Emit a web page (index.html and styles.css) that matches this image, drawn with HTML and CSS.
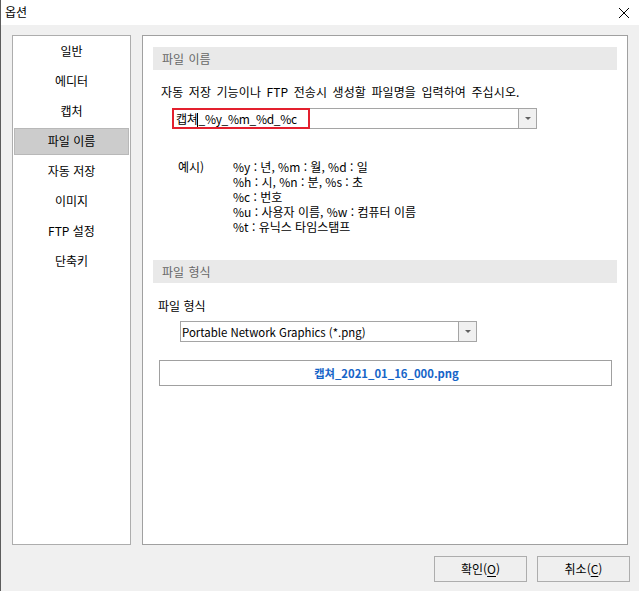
FILE: index.html
```html
<!DOCTYPE html>
<html lang="ko">
<head>
<meta charset="utf-8">
<title>옵션</title>
<link rel="stylesheet" href="styles.css">
</head>
<body>
<div class="window">
  <div class="titlebar">
    <span class="title">옵션</span>
    <svg class="close" width="12" height="12" viewBox="0 0 12 12"><path d="M1 1 L11 11 M11 1 L1 11" stroke="#000" stroke-width="1" fill="none"/></svg>
  </div>
  <div class="main">
    <div class="nav">
      <div class="nav-item">일반</div>
      <div class="nav-item">에디터</div>
      <div class="nav-item">캡처</div>
      <div class="nav-item selected">파일 이름</div>
      <div class="nav-item">자동 저장</div>
      <div class="nav-item">이미지</div>
      <div class="nav-item">FTP 설정</div>
      <div class="nav-item">단축키</div>
    </div>
    <div class="content">
      <div class="section-head">파일 이름</div>
      <p class="desc">자동 저장 기능이나 FTP 전송시 생성할 파일명을 입력하여 주십시오.</p>
      <div class="combo combo-name">
        <span class="combo-text name-text">캡쳐<span class="caret"></span>_%y_%m_%d_%c</span>
        <span class="highlight"></span>
        <span class="drop"><span class="arrow"></span></span>
      </div>
      <div class="examples">
        <div class="ex-label">예시)</div>
        <div class="ex-list">
          <div>%y : 년, %m : 월, %d : 일</div>
          <div>%h : 시, %n : 분, %s : 초</div>
          <div>%c : 번호</div>
          <div>%u : 사용자 이름, %w : 컴퓨터 이름</div>
          <div>%t : 유닉스 타임스탬프</div>
        </div>
      </div>
      <div class="section-head second">파일 형식</div>
      <div class="label">파일 형식</div>
      <div class="combo combo-format">
        <span class="combo-text format-text">Portable Network Graphics (*.png)</span>
        <span class="drop"><span class="arrow"></span></span>
      </div>
      <div class="preview">캡쳐_2021_01_16_000.png</div>
    </div>
  </div>
  <div class="footer">
    <div class="btn">확인(<u>O</u>)</div>
    <div class="btn">취소(<u>C</u>)</div>
  </div>
</div>
</body>
</html>
```
FILE: styles.css
```css
html, body {
  margin: 0;
  padding: 0;
}
body {
  width: 639px;
  height: 591px;
  overflow: hidden;
  font-family: "Noto Sans CJK KR", "Noto Sans", sans-serif;
  font-size: 12px;
  color: #000;
  background: #f0f0f0;
}
.window {
  height: 591px;
  border-left: 1px solid #5c5c5c;
  display: flex;
  flex-direction: column;
  background: #f0f0f0;
}
.titlebar {
  height: 25px;
  background: #fff;
  display: flex;
  align-items: center;
  justify-content: space-between;
  padding: 0 9px 0 4px;
  flex: none;
}
.title {
  line-height: 16px;
  margin-top: -1px;
}
.close {
  margin-top: 1px;
}
.main {
  display: flex;
  gap: 11px;
  padding: 10px 0 0 11px;
  height: 510px;
  flex: none;
}
.nav {
  width: 119px;
  box-sizing: border-box;
  background: #fff;
  border: 1px solid #adadad;
  display: flex;
  flex-direction: column;
  gap: 3px;
  padding: 1px 1px 0 1px;
}
.nav-item {
  height: 27px;
  box-sizing: border-box;
  border: 1px solid transparent;
  display: flex;
  align-items: center;
  justify-content: center;
  line-height: 16px;
  padding-bottom: 2px;
}
.nav-item:first-child {
  margin-top: 1px;
}
.nav-item.selected {
  background: #cccccc;
  border-color: #b8b8b8;
}
.content {
  width: 486px;
  box-sizing: border-box;
  background: #fff;
  border: 1px solid #a0a0a0;
  padding: 11px 10px 0 10px;
  display: flex;
  flex-direction: column;
  align-items: flex-start;
}
.section-head {
  align-self: stretch;
  height: 23px;
  background: #e9e9e9;
  color: #666;
  display: flex;
  align-items: center;
  padding-left: 9px;
  line-height: 16px;
  word-spacing: 1px;
}
.section-head.second {
  margin-top: 26px;
}
.desc {
  margin: 14px 0 0 8px;
  line-height: 16px;
  word-spacing: 2px;
  letter-spacing: 0.1px;
}
.combo {
  position: relative;
  height: 21px;
  box-sizing: border-box;
  border: 1px solid #a5a5a5;
  background: #fff;
  display: flex;
  align-items: center;
}
.combo-text {
  flex: 1;
  line-height: 16px;
  padding-left: 4px;
  white-space: nowrap;
}
.name-text {
  padding-left: 3px;
  letter-spacing: -0.3px;
}
.format-text {
  padding-left: 1px;
  font-size: 11.4px;
}
.combo-name {
  width: 365px;
  margin: 8px 0 0 19px;
}
.caret {
  display: inline-block;
  width: 1px;
  height: 14px;
  background: #000;
  vertical-align: -3px;
}
.highlight {
  position: absolute;
  left: -1px;
  top: -1px;
  width: 138px;
  height: 21px;
  box-sizing: border-box;
  border: 2px solid #e3202e;
}
.drop {
  width: 17px;
  align-self: stretch;
  background: #f0f0f0;
  border-left: 1px solid #a5a5a5;
  display: flex;
  align-items: center;
  justify-content: center;
}
.arrow {
  width: 0;
  height: 0;
  border-left: 3px solid transparent;
  border-right: 3px solid transparent;
  border-top: 3px solid #606060;
}
.examples {
  display: flex;
  margin: 30px 0 0 25px;
  line-height: 15px;
}
.ex-label {
  width: 55px;
}
.combo-format {
  width: 297px;
  margin: 7px 0 0 27px;
}
.label {
  margin: 15px 0 0 5px;
  line-height: 16px;
}
.preview {
  width: 453px;
  height: 26px;
  box-sizing: border-box;
  border: 1px solid #a0a0a0;
  margin: 18px 0 0 6px;
  display: flex;
  align-items: center;
  justify-content: center;
  color: #1665c8;
  font-weight: bold;
  font-size: 11.3px;
  line-height: 16px;
  padding-left: 2px;
}
.footer {
  display: flex;
  justify-content: flex-end;
  gap: 10px;
  padding: 11px 9px 0 0;
}
.btn {
  width: 93px;
  height: 26px;
  box-sizing: border-box;
  border: 1px solid #adadad;
  background: #efefef;
  display: flex;
  align-items: center;
  justify-content: center;
  line-height: 16px;
}
.btn u {
  text-decoration-thickness: 1px;
  text-underline-offset: 2px;
}
```
